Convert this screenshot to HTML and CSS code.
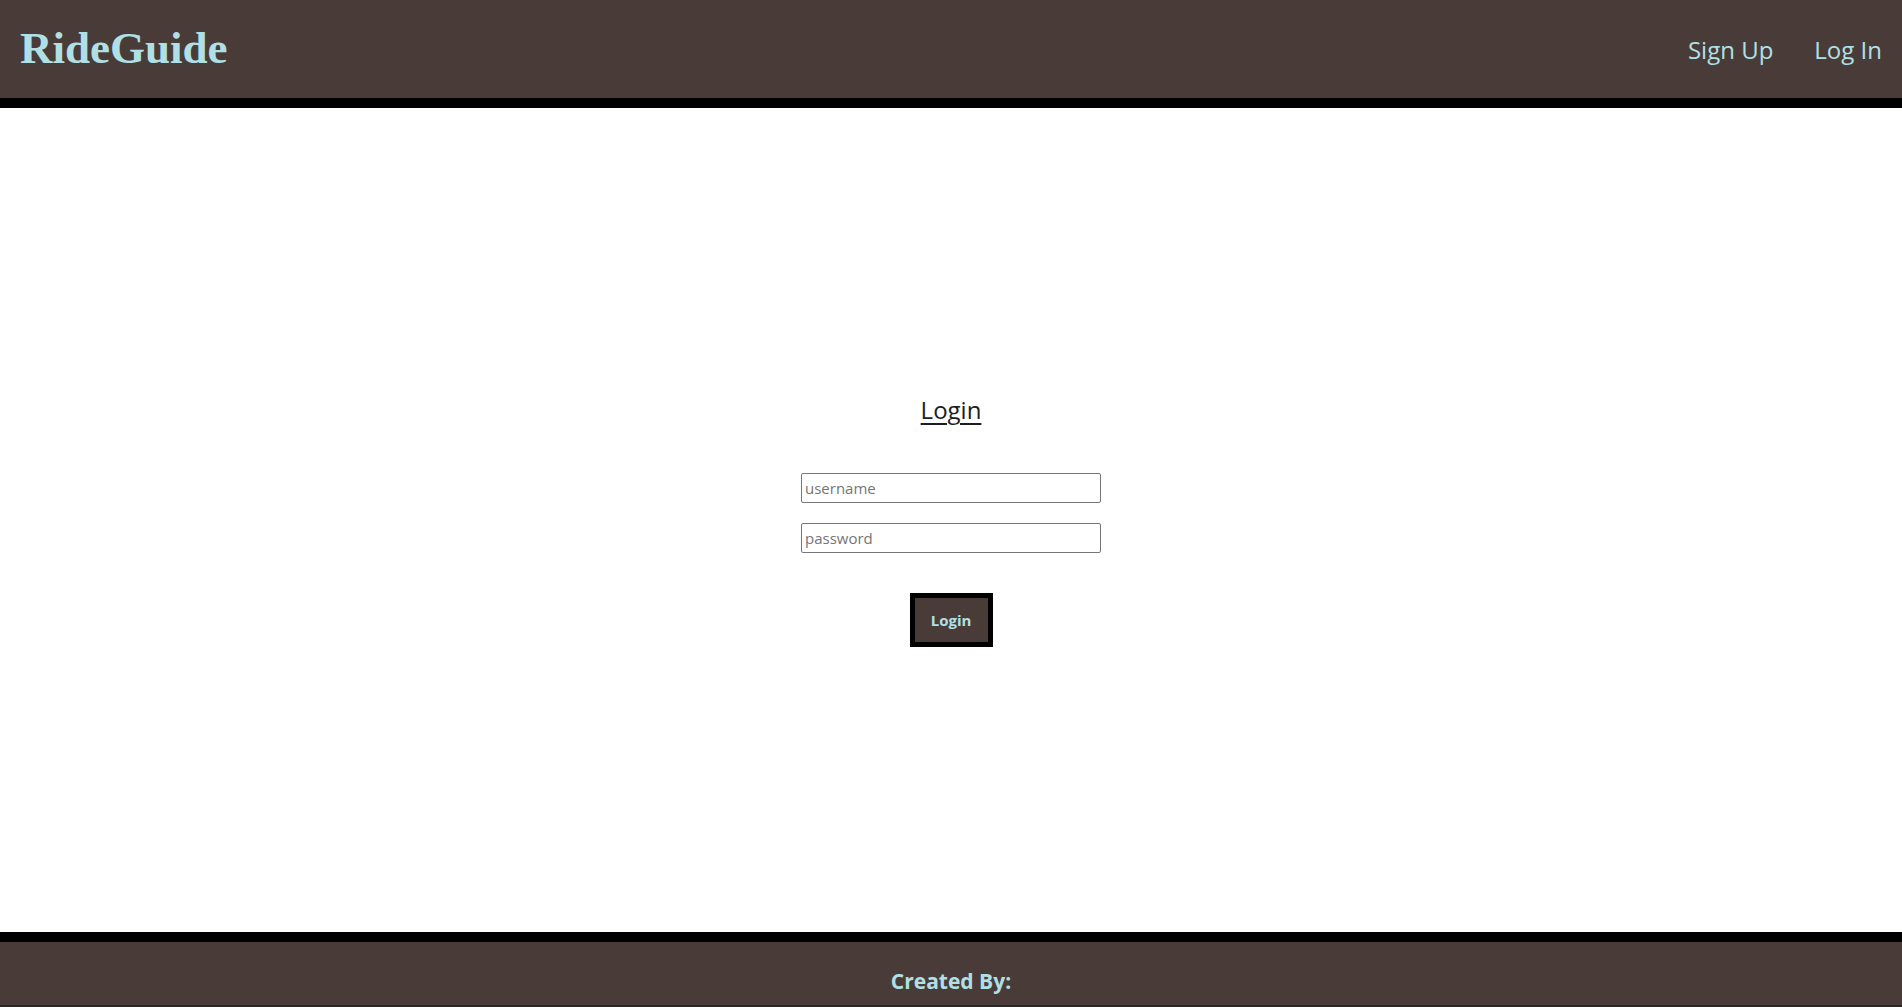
FILE: index.html
```html
<!DOCTYPE html>
<html>
<head>
<meta charset="utf-8">
<link rel="stylesheet" href="styles.css">
</head>
<body>
<header class="topbar">
  <div class="logo">RideGuide</div>
  <nav class="nav">
    <a class="nav-link" href="#">Sign Up</a>
    <a class="nav-link" href="#">Log In</a>
  </nav>
</header>
<main class="main">
  <form class="login">
    <h2 class="login-title">Login</h2>
    <div class="fields">
      <input class="field" type="text" placeholder="username">
      <input class="field" type="password" placeholder="password">
    </div>
    <button class="login-btn" type="button">Login</button>
  </form>
</main>
<footer class="footer">
  <div class="footer-title">Created By:</div>
</footer>
</body>
</html>
```

FILE: styles.css
```css
html, body {
  margin: 0;
  padding: 0;
}
body {
  height: 100vh;
  display: flex;
  flex-direction: column;
  background: #ffffff;
  font-family: "Open Sans", "Noto Sans", sans-serif;
  overflow: hidden;
}
.topbar {
  height: 98px;
  background: #493b37;
  border-bottom: 10px solid #000;
  display: flex;
  align-items: center;
  justify-content: space-between;
  padding: 0 20px;
  flex-shrink: 0;
}
.logo {
  font-family: "Liberation Serif", "Times New Roman", serif;
  font-weight: bold;
  font-size: 45px;
  color: #b0e0e6;
  margin-top: -2px;
}
.nav {
  display: flex;
  gap: 41px;
  margin-top: 0;
}
.nav-link {
  color: #b0e0e6;
  text-decoration: none;
  font-size: 24px;
}
.main {
  flex: 1;
  display: flex;
  align-items: center;
  justify-content: center;
}
.login {
  display: flex;
  flex-direction: column;
  align-items: center;
  margin-top: 0;
}
.login-title {
  margin: 0 0 47px 0;
  font-size: 24px;
  font-weight: 500;
  color: #1e1e1e;
  text-decoration: underline;
  text-underline-offset: 4px;
  text-decoration-thickness: 2px;
}
.fields {
  display: flex;
  flex-direction: column;
  gap: 20px;
}
.field {
  box-sizing: border-box;
  width: 300px;
  height: 30px;
  border: 1px solid #767676;
  border-radius: 2px;
  padding: 0 3px;
  font-family: "Open Sans", sans-serif;
  font-size: 15px;
  color: #333;
}
.field::placeholder {
  color: #757575;
}
.login-btn {
  margin-top: 40px;
  box-sizing: border-box;
  width: 83px;
  height: 54px;
  background: #493b37;
  border: 5px solid #000;
  color: #b0e0e6;
  font-family: "Open Sans", sans-serif;
  font-weight: bold;
  font-size: 15px;
  padding: 0;
}
.footer {
  height: 63px;
  background: #493b37;
  border-top: 10px solid #000;
  border-bottom: 2px solid #2b2727;
  display: flex;
  justify-content: center;
  align-items: center;
  flex-shrink: 0;
}
.footer-title {
  color: #b0e0e6;
  font-weight: bold;
  font-size: 21px;
  margin-top: 14px;
}
```
